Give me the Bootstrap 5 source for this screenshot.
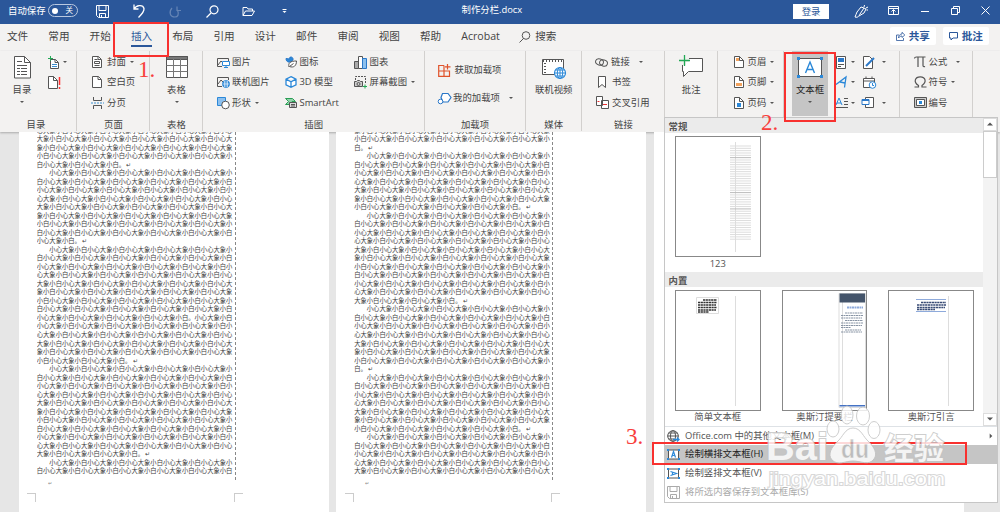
<!DOCTYPE html>
<html lang="zh-CN">
<head>
<meta charset="utf-8">
<title>制作分栏.docx</title>
<link href="https://cdn.jsdelivr.net/npm/bootstrap@5.3.0/dist/css/bootstrap.min.css" rel="stylesheet">
<style>
body{width:1000px;height:512px;overflow:hidden;background:#e6e6e6;color:#444;font-family:"Open Sans","Noto Sans CJK SC",sans-serif;font-size:9.4px;line-height:12px}
svg{display:block;flex:none;overflow:visible;fill:none;stroke:#555;stroke-width:1}
.titlebar{height:24px;background:#2b579a;color:#fff}
.titlebar svg{stroke:#fff}
.titlebar>*{flex:none}
.pill{width:30px;height:13px;border:1px solid #b9c8e0;border-radius:7px;font-size:7.5px;line-height:11px}
.knob{width:6px;height:6px;border-radius:50%;background:#fff;margin-left:3px}
.login{width:36px;height:15px;background:#fff;color:#2b579a;line-height:15px}
.tabs{height:27px;background:#f3f2f1;font-size:10.6px;padding-left:7px;padding-top:3px}
.tab-i{width:41.3px;height:22px;line-height:18px;white-space:nowrap}
.tab-on{color:#2b579a}
.tab-on span{display:inline-block;height:20px;border-bottom:2.5px solid #2b579a}
.chip{width:46px;height:18px;background:#fff;border-radius:2px;color:#2b579a;font-weight:700;gap:4px}
.chip svg{stroke:#2b579a}
.ribbon{height:81px;background:#f3f2f1;box-shadow:0 1px 2px #aaa}
.grp{flex:none;position:relative}
.grp::after{content:"";position:absolute;right:0;top:0;bottom:1px;width:1px;background:#d2d0ce}
.grp-name{height:12px;text-align:center;white-space:nowrap}
.grp-body{height:67.5px}
.stack{padding-top:1px;flex:none}
.it{height:20.3px;white-space:nowrap}
.ic{width:15px;flex:none}
.caret{width:0;height:0;border:2px solid transparent;border-top:2.5px solid #555;border-bottom:0;margin-left:4px;flex:none}
.big{flex:none;padding-top:5px;white-space:nowrap}
.big svg{margin-bottom:5px;height:23px}
.big .caret{margin:5px 0 0}
.pressed{background:#c5c5c5;width:36px;height:65px;color:#222}
.canvas-doc{height:380px;padding-left:18.7px;gap:7.6px;overflow:hidden}
.sheet{width:309.9px;background:#fff;flex:none;padding-left:18px;position:relative}
.txt{width:199px;height:348px;border-right:1px dashed #888;overflow:hidden;padding-top:-1px;font:6.32px/8.52px "Noto Sans CJK SC",sans-serif;color:#3d3d3d}
.ln{height:8.52px;white-space:pre}
.txt-in{margin-top:-5.4px}
.endm{font-size:5px;color:#888;padding-left:11px;height:13px;line-height:7px}
.marks{width:215.5px;height:9px;margin-left:-9.5px}
.marks i{width:9px;height:9px;border-top:1px solid #ccc}
.marks i:first-child{border-right:1px solid #ccc}
.marks i:last-child{border-left:1px solid #ccc}
.drop{position:absolute;left:663.5px;top:116.5px;width:334.5px;height:386.5px;background:#fff;border:1px solid #c6c6c6;color:#555}
.sec{height:15px;background:#ebebeb;font-weight:700;line-height:17px;padding-left:4px}
.gal{height:308px}
.shelf{padding:3px 0 0 10.5px;gap:21.2px}
.tile{width:85.5px;text-align:center;white-space:nowrap}
.thumb{width:85.5px;height:121px;border:1px solid #888;background:#fff}
.thumb svg{stroke:none}
.scroll{width:14px;background:#f3f3f3}
.sbtn{height:13px;background:#fff;border:1px solid #ddd}
.mi{height:18.8px;padding-left:2.5px;line-height:18.8px}
.mi .ic{width:18px}
.hot{background:#c5c5c5;color:#222}
.red{position:absolute;border:2.5px solid #f8312f;z-index:5}
.num{position:absolute;font:23px/24px "Liberation Serif",serif;color:#f8403c;z-index:5}
.wm{position:absolute;left:766px;top:402px;z-index:6}
</style>
</head>
<body class="position-relative">
<header class="titlebar d-flex align-items-center position-relative">
 <span style="margin-left:8px;margin-top:-3px">自动保存</span>
 <span class="pill d-flex align-items-center" style="margin:-3px 0 0 2px"><span class="knob"></span><span style="margin-left:8px">关</span></span>
 <svg style="margin:-2px 0 0 18px" width="13" height="13"><path d="M.5.5h12v12H2.5l-2-2zM3 .5v5h7v-5M3.500 12.500v-4h6v4M5.500 10v2"/></svg>
 <svg style="margin:-3px 0 0 24px" width="12" height="14"><path stroke-width="1.300" d="M1 .5v4.500h4.500M1 5C3 1 10 0 11 4.500c.5 3-2 5.500-5.500 9"/></svg>
 <svg style="margin:-2px 0 0 24px;opacity:.28" width="13" height="13"><path stroke-width="1.200" d="M8 1.500v4h4M8.500 5c2 5 0 7-2.500 7C1 12-.5 7 3 3"/></svg>
 <svg style="margin:-2px 0 0 24px" width="13" height="13"><circle cx="8" cy="4.800" r="4" stroke-width="1.200"/><path d="M5 8 .5 12.500" stroke-width="1.200"/></svg>
 <svg style="margin:-1px 0 0 23px" width="13" height="11"><path d="M1 9.500v-8h4l1 1.500h4.500v2M1 9.500l2.500-4.500h9l-2.500 4.500z"/></svg>
 <svg style="margin:-2px 0 0 27px" width="5" height="5"><path d="M.5.5h4"/><path d="M.5 2h4l-2 2z" fill="#fff" stroke="none"/></svg>
 <span style="margin:-4px 0 0 175px;width:63px;white-space:nowrap">制作分栏.docx</span>
 <span class="login text-center" style="margin:-2px 0 0 268.500px">登录</span>
 <svg style="margin:-1px 0 0 25px" width="14" height="13"><path d="M1 12c3 1 4-1 5-3l4-6-3-1-4 5c-1 2-1 3-2 5M5 11l5-3 2-4-2-1M10 2l.5-2M12 3l2-1M12.500 5h1.500"/></svg>
 <svg style="margin:-3px 0 0 20px" width="11" height="9"><path d="M.5.5h10v8H.5zM.5 2.500h10M5.500 8V4M3.500 5.500l2-2 2 2"/></svg>
 <svg style="margin:-2px 0 0 22px" width="8" height="3"><path d="M0 1.500h8"/></svg>
 <svg style="margin:-3px 0 0 22px" width="9" height="9"><path d="M.5 2.500h6v6h-6zM2.500 2.500v-2h6v6h-2"/></svg>
 <svg style="margin:-3px 0 0 21px" width="9" height="9"><path d="M.5.5l8 8M8.500.5l-8 8"/></svg>
</header>
<nav class="tabs d-flex">
 <div class="tab-i">文件</div><div class="tab-i">常用</div><div class="tab-i">开始</div><div class="tab-i tab-on"><span>插入</span></div><div class="tab-i">布局</div><div class="tab-i">引用</div><div class="tab-i">设计</div><div class="tab-i">邮件</div><div class="tab-i">审阅</div><div class="tab-i">视图</div><div class="tab-i">帮助</div>
 <div class="tab-i" style="width:58px">Acrobat</div>
 <div class="tab-i d-flex" style="width:370.500px"><svg style="margin-top:4px" width="16" height="12"><circle cx="7" cy="4.500" r="3.800"/><path d="M4.500 7.500.5 11.500"/></svg>搜索</div>
 <div class="chip d-flex align-items-center justify-content-center"><svg width="9" height="9"><path d="M3 3H.5v5.500h7V6M2.500 6c0-3 2-4 3.500-4V.3L8.800 3 6 5.500V4C4.500 4 3.500 4.500 2.500 6z" stroke-width=".8"/></svg>共享</div>
 <div class="chip d-flex align-items-center justify-content-center" style="margin-left:7px"><svg width="9" height="9"><path d="M.5.5h8v5.500H4L2 8V6H.5z"/></svg>批注</div>
</nav>
<section class="ribbon d-flex position-relative">
 <div class="grp" style="width:77px">
  <div class="grp-body d-flex">
   <div class="big d-flex flex-column align-items-center" style="width:44px"><svg width="17" height="23"><path fill="#fff" d="M.5.5h10l6 6v15.500H.5z"/><path d="M10.500.5v6h6M3 5.500h5M3 9.500h10M3 12.500h3m1 0h6M3 15.500h3m1 0h6M3 18.500h3m1 0h6"/></svg>目录<i class="caret"></i></div>
   <div class="stack" style="padding-left:4px"><div class="it d-flex align-items-center"><svg width="11" height="13"><path fill="#fff" d="M2.500 3.500h5l3 3v6h-8z"/><path d="M7 3.500v3h3"/><path stroke="#3b8fd0" d="M4 8.500h5M4 10.500h5"/><path stroke="#22a855" d="M0 2.500h5M2.500 0v5"/></svg><i class="caret"></i></div>
   <div class="it d-flex align-items-center"><svg width="13" height="13"><path fill="#fff" d="M.5.5h5l4 4v8h-9z"/><path d="M5.500.5v4h4"/><path stroke="#f33" stroke-width="1.500" d="M11.500 1v8M11.500 11v2"/></svg></div></div>
  </div><div class="grp-name" style="padding-right:5px">目录</div></div>
 <div class="grp" style="width:73px">
  <div class="grp-body d-flex" style="padding-left:15px"><div class="stack">
   <div class="it d-flex align-items-center"><span class="ic"><svg width="10" height="12"><path fill="#fff" d="M.5.5h6l3 3v8h-9z"/><path d="M6 .5v3h3M2.500 3.500h3M2.500 5.500h5v2h-5zM2.500 9.500h5"/></svg></span>封面<i class="caret"></i></div>
   <div class="it d-flex align-items-center"><span class="ic"><svg width="10" height="12"><path fill="#fff" d="M.5.5h6l3 3v8h-9z"/><path d="M6 .5v3h3"/></svg></span>空白页</div>
   <div class="it d-flex align-items-center"><span class="ic"><svg width="11" height="12"><path d="M1.500 0v3.500h8V0M1.500 12V8.500h8V12"/><path stroke="#3b8fd0" stroke-dasharray="2 1" d="M-1 6h13"/></svg></span>分页</div>
  </div></div><div class="grp-name">页面</div></div>
 <div class="grp" style="width:53px">
  <div class="grp-body"><div class="big d-flex flex-column align-items-center"><svg width="22" height="23"><path fill="#fff" d="M.5.5h21v21H.5z"/><path fill="#777" d="M.5.5h21v3H.5z"/><path d="M.5 9.500h21M.5 15.500h21M7.500 3v18.500M14.500 3v18.500" stroke="#777"/></svg>表格<i class="caret"></i></div></div><div class="grp-name">表格</div></div>
 <div class="grp" style="width:221.500px">
  <div class="grp-body d-flex" style="padding-left:14px">
   <div class="stack" style="width:67.500px">
    <div class="it d-flex align-items-center"><span class="ic"><svg width="13" height="11"><path d="M5 9.500H.5v-8h11V4M1 8l3-4 2 2"/><path fill="#fff" stroke="#2b88d8" d="M5.500 4.500h7v4h-7zM7 10.500h4M9 8.500v2"/></svg></span>图片</div>
    <div class="it d-flex align-items-center"><span class="ic"><svg width="13" height="12"><path d="M5 10.500H.5v-9h11V4M1 8l3-4 2 2"/><circle cx="9" cy="8" r="3.500" fill="#2b88d8" stroke="#2b88d8"/><path stroke="#fff" stroke-width=".6" d="M5.500 8h7M9 4.500v7M7.500 5v6M10.500 5v6"/></svg></span>联机图片</div>
    <div class="it d-flex align-items-center"><span class="ic"><svg width="13" height="12"><path fill="#8cc0ee" stroke="#2b88d8" d="M.5.500h8v8h-8z"/><circle cx="8.500" cy="8" r="3.800" fill="#fff"/></svg></span>形状<i class="caret"></i></div>
   </div>
   <div class="stack" style="width:69px">
    <div class="it d-flex align-items-center"><span class="ic"><svg width="13" height="12"><path fill="#2b88d8" stroke="#2b78c8" d="M1 2.500c0 4 4 4.500 6 2.500 2-1 1-4-1-4S4.500 3 4.500 3z"/><path fill="#fff" d="M4 11c-1-4 1-6 7.500-6 0 5-3 7-7 5.500l4-3"/></svg></span>图标</div>
    <div class="it d-flex align-items-center"><span class="ic"><svg width="13" height="12"><path stroke="#2b88d8" stroke-width="1.300" fill="#fff" d="M6 .7l5 2.500v5.600l-5 2.500-5-2.500V3.200zM1 3.200l5 2.600 5-2.600M6 6v5"/></svg></span>3D 模型</div>
    <div class="it d-flex align-items-center"><span class="ic"><svg width="13" height="12"><path fill="#8fd3a8" stroke="#2a9d55" d="M.5 1.500h7l3 3H7l-2 3H.5l3-3z"/><path fill="#ddd" d="M4.500 5.500h7v5h-7zM6 7.500h4M6 9h4"/></svg></span>SmartArt</div>
   </div>
   <div class="stack">
    <div class="it d-flex align-items-center"><span class="ic" style="width:16px"><svg width="13" height="13"><path fill="#aaa" d="M.5 5.500h4v7h-4z"/><path fill="#fff" d="M4.500.5h4v12h-4z"/><path fill="#8cc0ee" stroke="#2b78c8" d="M8.500 2.500h4v10h-4z"/></svg></span>图表</div>
    <div class="it d-flex align-items-center"><span class="ic" style="width:16px"><svg width="13" height="12"><path stroke-dasharray="2 1" d="M1.500 4V.500h10v7"/><path fill="#ccc" d="M.5 5.500h2l1-1h2l1 1h2v5h-8z"/><circle cx="4.500" cy="8" r="1.500"/><path stroke="#22a855" d="M9 10.500h4M11 8.500v4"/></svg></span>屏幕截图<i class="caret"></i></div>
   </div>
  </div><div class="grp-name">插图</div></div>
 <div class="grp" style="width:101px">
  <div class="grp-body" style="padding:9px 0 0 13.500px">
   <div class="it d-flex align-items-center"><span class="ic" style="width:16.500px"><svg width="13" height="13"><path stroke="#e0532b" stroke-width="1.200" d="M6 1.500H.7v10.800h10.800V7H.7M6 1.500v10.800M9.500 0v5.500M7 2.800h5.500"/></svg></span>获取加载项</div>
   <div class="it d-flex align-items-center" style="margin-top:8px"><span class="ic"><svg width="13" height="13"><path fill="#fff" stroke="#2b78c8" stroke-width="1.200" d="M4.500 1.500h5.500l3 4-3 4.500H5L3 5.500z"/><circle cx="2.500" cy="9.500" r="2.300" fill="#fff" stroke="#2b78c8"/></svg></span>我的加载项<i class="caret" style="margin-left:9px"></i></div>
  </div><div class="grp-name">加载项</div></div>
 <div class="grp" style="width:56.500px">
  <div class="grp-body"><div class="big d-flex flex-column align-items-center"><svg width="24" height="23"><path fill="#fff" d="M.5 3.500h21v15H.5z"/><path stroke-width="2" stroke-dasharray="1 2" d="M1 5h20M3 7v11"/><circle cx="18" cy="17" r="5.500" fill="#fff" stroke="#2b88d8" stroke-width="1.200"/><path stroke="#2b88d8" d="M12.500 17h11M18 11.500v11M13.500 14h9M13.500 20h9"/><ellipse cx="18" cy="17" rx="2.700" ry="5.500" stroke="#2b88d8"/></svg>联机视频</div></div><div class="grp-name">媒体</div></div>
 <div class="grp" style="width:83px">
  <div class="grp-body d-flex" style="padding-left:13px"><div class="stack">
   <div class="it d-flex align-items-center"><span class="ic" style="width:16px"><svg width="13" height="9"><ellipse cx="4.500" cy="4" rx="4" ry="3" transform="rotate(15 4.500 4)"/><ellipse cx="8.500" cy="5" rx="4" ry="3" transform="rotate(15 8.500 5)"/></svg></span>链接<i class="caret" style="margin-left:9px"></i></div>
   <div class="it d-flex align-items-center"><span class="ic" style="width:17px"><svg width="11" height="12"><path fill="#fff" d="M3.500.5h7v11L7 8.500l-3.500 3z"/></svg></span>书签</div>
   <div class="it d-flex align-items-center"><span class="ic" style="width:17px"><svg width="14" height="13"><path fill="#fff" d="M1.500.5h6v9h-6zM6.500 4.500h7v8h-7z"/><path stroke="#e33" d="M2.500 5.500h2M8 8.500h4"/></svg></span>交叉引用</div>
  </div></div><div class="grp-name">链接</div></div>
 <div class="grp" style="width:52.500px">
  <div class="grp-body"><div class="big d-flex flex-column align-items-center"><svg width="25" height="23"><path fill="#fff" d="M3.500 2.500h20v13H9.500l-5 5v-5h-1z"/><path stroke="#f3f2f1" stroke-width="4" d="M1 4h9M5 1v8"/><path stroke="#22a855" stroke-width="1.300" d="M0 4.500h11M5.500-1v11"/></svg>批注</div></div></div>
 <div class="grp" style="width:66px">
  <div class="grp-body d-flex" style="padding-left:16px"><div class="stack">
   <div class="it d-flex align-items-center"><span class="ic" style="width:14px"><svg width="10" height="12"><path fill="#fff" d="M.5.5h5l4 4v7h-9z"/><path d="M5.500.5v4h4"/><path fill="#f2a25c" stroke="none" d="M2 2h3v3H2z"/></svg></span>页眉<i class="caret"></i></div>
   <div class="it d-flex align-items-center"><span class="ic" style="width:14px"><svg width="10" height="12"><path fill="#fff" d="M.5.5h5l4 4v7h-9z"/><path d="M5.500.5v4h4"/><path fill="#f2a25c" stroke="none" d="M2 7h6v3H2z"/></svg></span>页脚<i class="caret"></i></div>
   <div class="it d-flex align-items-center"><span class="ic" style="width:14px"><svg width="10" height="12"><path fill="#fff" d="M.5.5h5l4 4v7h-9z"/><path d="M5.500.5v4h4"/><path fill="#2b88d8" stroke="none" d="M3 6h4v4H3z"/></svg></span>页码<i class="caret"></i></div>
  </div></div></div>
 <div class="grp" style="width:116px">
  <div class="grp-body d-flex" style="padding-left:8.500px">
   <div class="big pressed d-flex flex-column align-items-center"><svg width="26" height="23"><path fill="#fff" d="M1.500 2.500h23v18h-23z"/><path stroke="#2b88d8" stroke-width="1.400" d="M8.500 17 13 6l4.500 11M10 13.500h6"/><path fill="#2b88d8" stroke="none" d="M0 1h3v3H0zM23 1h3v3h-3zM0 19h3v3H0zM23 19h3v3h-3z"/></svg>文本框<i class="caret"></i></div>
   <div class="stack" style="padding-left:8px;width:35px">
    <div class="it d-flex align-items-center"><svg width="11" height="13"><path fill="#fff" d="M.5.5h9v12h-9z"/><path fill="#2b78c8" stroke="none" d="M2 2h6v4H2z"/><path d="M2 8.500h6M2 10.500h3"/></svg><i class="caret"></i></div>
    <div class="it d-flex align-items-center"><svg width="11" height="12"><path stroke="#2b88d8" stroke-width="1.300" d="M0 8.500 10 1 8.500 11.500M4 6l5 1"/></svg><i class="caret"></i></div>
    <div class="it d-flex align-items-center"><svg width="12" height="12"><path stroke="#2b88d8" d="M0 8 3 1l3 7M1 6h4"/><path d="M8 1.500h4M8 4.500h4M8 7.500h4M0 10.500h12"/></svg><i class="caret" style="margin-left:3px"></i></div>
   </div>
   <div class="stack">
    <div class="it d-flex align-items-center"><svg width="13" height="13"><path fill="#fff" d="M.5.500h6l3 3v9h-9z"/><path stroke="#2b78c8" stroke-width="2" d="M3 10 11 2"/></svg><i class="caret" style="margin-left:6px"></i></div>
    <div class="it d-flex align-items-center"><svg width="13" height="13"><path fill="#fff" d="M.5 2.500h11v9H.5zM.5 5h11M3 .5v2M9 .5v2"/><circle cx="9.500" cy="9" r="3.300" fill="#fff" stroke="#2b88d8"/><path stroke="#2b88d8" d="M9.500 7v2.500H11"/></svg></div>
    <div class="it d-flex align-items-center"><svg width="13" height="13"><path fill="#fff" d="M2.500 1.500h8v10h-8z"/><path fill="#fff" stroke="#2b78c8" d="M-1 3.500h7v5h-7z"/><path stroke="#2b78c8" stroke-width="2" d="M-1 4h7"/></svg><i class="caret" style="margin-left:6px"></i></div>
   </div>
  </div></div>
 <div class="grp" style="width:73px">
  <div class="grp-body d-flex" style="padding-left:14px"><div class="stack">
   <div class="it d-flex align-items-center"><span class="ic"><svg width="13" height="12"><path stroke-width="1.200" d="M.5 2.500c0-1.500 1-1.500 2-1.500h9M4 1v10M9 1v8.500c0 1 1 1.500 2 1"/></svg></span>公式<i class="caret" style="margin-left:9px"></i></div>
   <div class="it d-flex align-items-center"><span class="ic"><svg width="13" height="12"><path stroke-width="1.200" d="M.5 11H4.500V9.500C-1 6 1 .8 6.300.8S13 6 8 9.500V11h4.500"/></svg></span>符号<i class="caret"></i></div>
   <div class="it d-flex align-items-center"><span class="ic"><svg width="13" height="11"><path fill="#ccc" d="M.5.5h12v10H.5z"/><path fill="#fff" d="M2.500 2.500h8v6h-8z"/><path fill="#2b88d8" stroke="none" d="M5 4h3v3H5z"/></svg></span>编号</div>
  </div></div></div>
</section>
<main class="canvas-doc d-flex">
 <article class="sheet"><div class="txt"><div class="txt-in" id="colA"></div></div><div class="endm">↵</div><div class="marks d-flex justify-content-between"><i></i><i></i></div></article>
 <article class="sheet"><div class="txt"><div class="txt-in" id="colB"></div></div><div class="endm">↵</div><div class="marks d-flex justify-content-between"><i></i><i></i></div></article>
 <article class="sheet"></article>
</main>

<aside class="drop">
 <div class="gal d-flex">
  <div class="flex-grow-1">
   <div class="sec">常规</div>
   <div class="shelf d-flex" style="height:139.500px"><div class="tile"><div class="thumb"><svg width="83" height="119" id="lines"><path stroke="#ddd" d="M59.500 5v110"/></svg></div><div style="padding-top:1px">123</div></div></div>
   <div class="sec">内置</div>
   <div class="shelf d-flex">
    <div class="tile"><div class="thumb"><svg width="83" height="119"><path stroke="#ddd" d="M59.500 5v110"/><path fill="#fff" stroke="#ddd" d="M20.500 6.500h22v16h-22z"/><path stroke="#333" stroke-width="1.300" stroke-dasharray="2.200 .5" d="M27 9h14M22 11.500h19M22 14h18M22 16.500h19M22 19h18M22 21h11"/></svg></div>简单文本框</div>
    <div class="tile"><div class="thumb"><svg width="83" height="119"><path stroke="#ddd" d="M59.500 10v105M56 2.500h26.500v114H56z"/><path fill="#44546a" d="M56.500 2.500H82v9H56.500z"/><path fill="#4472c4" d="M56.500 114H82v1.500H56.500z"/><path stroke="#8eaadb" stroke-width="1.800" stroke-dasharray="2 .5" d="M64 16.500h16"/><path stroke="#8995a5" stroke-dasharray="2 .5" d="M62 22h18M58 24.500h22M58 27h21M62 29.500h18M58 32h22M58 34.500h21M58 36.500h10M62 39h16M58 41h21"/></svg></div>奥斯汀提要栏</div>
    <div class="tile"><div class="thumb"><svg width="83" height="119"><path stroke="#ddd" d="M59.500 5v110"/><path stroke="#8eaadb" d="M27 8.500h30M27 20.500h30"/><path stroke="#384b75" stroke-width="1.300" stroke-dasharray="2.200 .5" d="M32 11.500h25M28 14h29M28 16.500h28M28 18.500h18"/></svg></div>奥斯汀引言</div>
   </div>
  </div>
  <div class="scroll d-flex flex-column"><div class="sbtn d-flex align-items-center justify-content-center"><i class="caret m-0" style="transform:rotate(180deg) scale(1.500)"></i></div><div style="height:47px;background:#fff;border:1px solid #ccc"></div><div class="sbtn mt-auto d-flex align-items-center justify-content-center"><i class="caret m-0" style="transform:scale(1.500)"></i></div></div>
 </div>
 <div class="border-top">
  <div class="mi d-flex align-items-center"><span class="ic"><svg width="13" height="12"><circle cx="6" cy="6" r="5.300"/><ellipse cx="6" cy="6" rx="2.500" ry="5.300"/><path d="M.5 6h11M1.500 3h9M1.500 9h6"/><path stroke="#2b88d8" stroke-width="1.300" d="M6 9.500h6M10 7.500l2 2-2 2"/></svg></span>Office.com 中的其他文本框(M)<i class="caret ms-auto me-1" style="transform:rotate(-90deg) scale(1.300)"></i></div>
  <div class="mi hot d-flex align-items-center"><span class="ic"><svg width="13" height="11"><path fill="#fff" d="M1.500 1h10v9h-10z"/><path stroke="#2b88d8" stroke-width="1.200" d="M4.500 8.500l2-6 2 6M5 6.500h3"/><path fill="#2b88d8" stroke="none" d="M0 0h2v2H0zM11 0h2v2h-2zM0 9h2v2H0zM11 9h2v2h-2z"/></svg></span>绘制横排文本框(H)</div>
  <div class="mi d-flex align-items-center"><span class="ic"><svg width="13" height="11"><path fill="#fff" d="M1.500 1h10v9h-10z"/><path stroke="#2b88d8" stroke-width="1.200" d="M3.500 3.500l6 2-6 2M5.500 4v3"/><path fill="#2b88d8" stroke="none" d="M0 0h2v2H0zM11 0h2v2h-2zM0 9h2v2H0zM11 9h2v2h-2z"/></svg></span>绘制竖排文本框(V)</div>
  <div class="mi d-flex align-items-center" style="color:#aaa"><span class="ic"><svg width="13" height="13" style="stroke:#aaa"><path d="M.5.5h12v12H2.500l-2-2zM3 .5v5h7v-5M3.500 12.500v-4h6v4M5.500 10v2"/></svg></span>将所选内容保存到文本框库(S)</div>
 </div>
</aside>

<div class="red" style="left:113px;top:21.500px;width:56px;height:35.500px"></div>
<div class="red" style="left:783.500px;top:52px;width:52.500px;height:69.500px"></div>
<div class="red" style="left:652px;top:442px;width:315px;height:23px"></div>
<div class="num" style="left:138px;top:58px">1.</div>
<div class="num" style="left:761px;top:111px">2.</div>
<div class="num" style="left:626px;top:425px">3.</div>
<svg class="wm" width="182" height="90" style="stroke:#c4c4c4;fill:#fff;stroke-width:1" font-family="Liberation Sans, Noto Sans CJK SC, sans-serif" font-weight="700">
 <g opacity=".82">
 <text x="0" y="58" font-size="39" textLength="62" lengthAdjust="spacingAndGlyphs" paint-order="stroke" stroke-width="2">Bai</text>
 <ellipse cx="67" cy="27" rx="6" ry="8"/><ellipse cx="81" cy="13" rx="6" ry="9"/><ellipse cx="97" cy="14" rx="6.500" ry="9"/><ellipse cx="108" cy="28" rx="6" ry="8.500"/>
 <path d="M87 26c8 0 10 9 16 14 5 5 9 12 5 17-5 7-13 2-21 2s-15 5-21-1c-5-6 0-13 5-18 6-5 8-14 16-14z"/>
 <text x="75" y="56" font-size="25" textLength="28" lengthAdjust="spacingAndGlyphs" fill="#bbb" stroke="#fff" stroke-width=".5">du</text>
 <text x="118" y="57" font-size="30" textLength="60" paint-order="stroke" stroke-width="2">经验</text>
 <text x="3" y="83" font-size="19" font-weight="400" textLength="176" lengthAdjust="spacingAndGlyphs" paint-order="stroke" stroke="#d0d0d0" stroke-width="2">jingyan.baidu.com</text>
 </g>
</svg>
<script>
// Each row is [indent, phase in the repeated phrase, characters, tail]
const phrase = '小心大象小白';
const run = (p, n) => Array.from({length: n}, (_, i) => phrase[(p + i) % 6]).join('');
// A paragraph: one indented row, full rows, then a short last row of n characters
function para(full, last, start = 5) {
  const rows = ['　　' + run(0, 29)];
  for (let i = 0; i < full; i++) rows.push(run(start + i, 31));
  if (last) rows.push(run(start + full, last) + '。 ↵');
  return rows;
}
const a = [run(1, 31), run(2, 31), run(3, 31), run(4, 31), run(5, 13) + '。 ↵',
  ...para(7, 6), ...para(7, 0), run(0, 24) + '。' + run(0, 6),
  run(0, 31), run(1, 31), run(2, 31), run(3, 31), run(4, 14) + '。 ↵',
  ...para(9, 16), ...para(1, 0)];
const b = [run(3, 31), run(4, 31), run(5, 1) + '。 ↵', ...para(5, 26), ...para(9, 16),
  ...para(6, 1), ...para(5, 26), ...para(4, 0)];
const put = (id, rows) => document.getElementById(id).innerHTML = rows.map(r => `<div class="ln">${r}</div>`).join('');
put('colA', a); put('colB', b);
let s = '';
for (let i = 0; i < 41; i++) s += `<path d="M54 ${9 + i * 2.33}h21" stroke="${[5, 20, 27].includes(i) ? '#bbb' : '#ddd'}"/>`;
document.getElementById('lines').innerHTML += s;
</script>
<script src="https://cdn.jsdelivr.net/npm/bootstrap@5.3.0/dist/js/bootstrap.bundle.min.js"></script>
</body>
</html>
